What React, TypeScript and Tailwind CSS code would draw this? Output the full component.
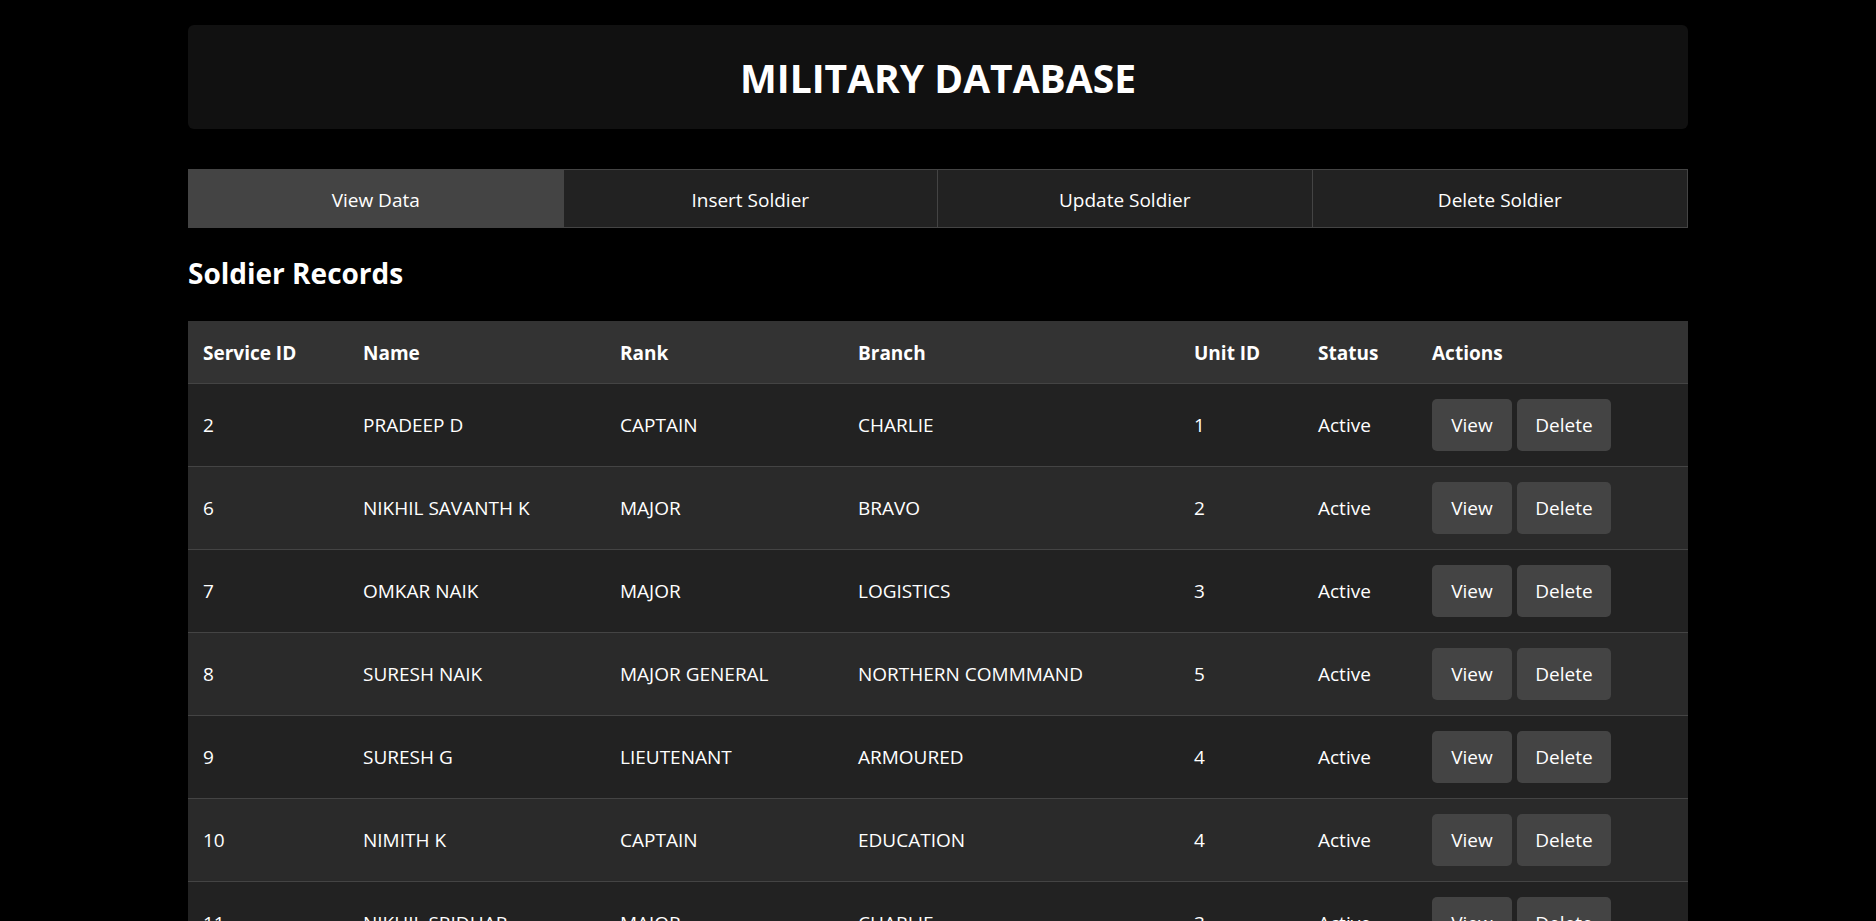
import React from "react";

type Row = { id: string; name: string; rank: string; branch: string; unit: string; status: string };

const rows: Row[] = [
  { id: "2", name: "PRADEEP D", rank: "CAPTAIN", branch: "CHARLIE", unit: "1", status: "Active" },
  { id: "6", name: "NIKHIL SAVANTH K", rank: "MAJOR", branch: "BRAVO", unit: "2", status: "Active" },
  { id: "7", name: "OMKAR NAIK", rank: "MAJOR", branch: "LOGISTICS", unit: "3", status: "Active" },
  { id: "8", name: "SURESH NAIK", rank: "MAJOR GENERAL", branch: "NORTHERN COMMMAND", unit: "5", status: "Active" },
  { id: "9", name: "SURESH G", rank: "LIEUTENANT", branch: "ARMOURED", unit: "4", status: "Active" },
  { id: "10", name: "NIMITH K", rank: "CAPTAIN", branch: "EDUCATION", unit: "4", status: "Active" },
  { id: "11", name: "NIKHIL SRIDHAR", rank: "MAJOR", branch: "CHARLIE", unit: "3", status: "Active" },
];

const tabs = ["View Data", "Insert Soldier", "Update Soldier", "Delete Soldier"];

const cell = "px-[15px] pt-[17px] pb-[15px] align-middle";

export default function App() {
  return (
    <div className="h-screen overflow-hidden bg-black text-white font-['Open_Sans','Noto_Sans',sans-serif]">
      <div className="mx-auto max-w-[1500px] pt-[25px]">
        <header className="flex h-[104px] items-center justify-center rounded-md bg-[#111111]">
          <h1 className="text-[39px] font-bold leading-none">MILITARY DATABASE</h1>
        </header>

        <nav className="mt-[40px] grid h-[59px] grid-cols-4 border border-[#444444] divide-x divide-[#444444]">
          {tabs.map((t, i) => (
            <button
              key={t}
              className={`flex items-center justify-center pt-[3px] text-[19px] text-white ${i === 0 ? "bg-[#444444]" : "bg-[#222222]"}`}
            >
              {t}
            </button>
          ))}
        </nav>

        <h2 className="mt-[27px] text-[28px] font-bold leading-[36px]">Soldier Records</h2>

        <table className="mt-[30px] w-full table-fixed border-collapse text-left text-[19px]">
          <colgroup>
            <col className="w-[160px]" />
            <col className="w-[257px]" />
            <col className="w-[238px]" />
            <col className="w-[336px]" />
            <col className="w-[124px]" />
            <col className="w-[114px]" />
            <col className="w-[271px]" />
          </colgroup>
          <thead>
            <tr className="h-[62px] bg-[#333333] border-b border-[#444444]">
              {["Service ID", "Name", "Rank", "Branch", "Unit ID", "Status", "Actions"].map((h) => (
                <th key={h} className="px-[15px] pt-[2px] pb-0 font-bold">
                  {h}
                </th>
              ))}
            </tr>
          </thead>
          <tbody>
            {rows.map((r, i) => (
              <tr key={r.id} className={`border-b border-[#444444] ${i % 2 === 0 ? "bg-[#222222]" : "bg-[#2a2a2a]"}`}>
                <td className={cell}>{r.id}</td>
                <td className={cell}>{r.name}</td>
                <td className={cell}>{r.rank}</td>
                <td className={cell}>{r.branch}</td>
                <td className={cell}>{r.unit}</td>
                <td className={cell}>{r.status}</td>
                <td className="px-[15px] py-[15px]">
                  <div className="flex gap-[5px]">
                    <button className="h-[52px] w-[80px] rounded-[5px] bg-[#444444] pt-[2px] text-[19px] text-white">View</button>
                    <button className="h-[52px] w-[94px] rounded-[5px] bg-[#444444] pt-[2px] text-[19px] text-white">Delete</button>
                  </div>
                </td>
              </tr>
            ))}
          </tbody>
        </table>
      </div>
    </div>
  );
}
